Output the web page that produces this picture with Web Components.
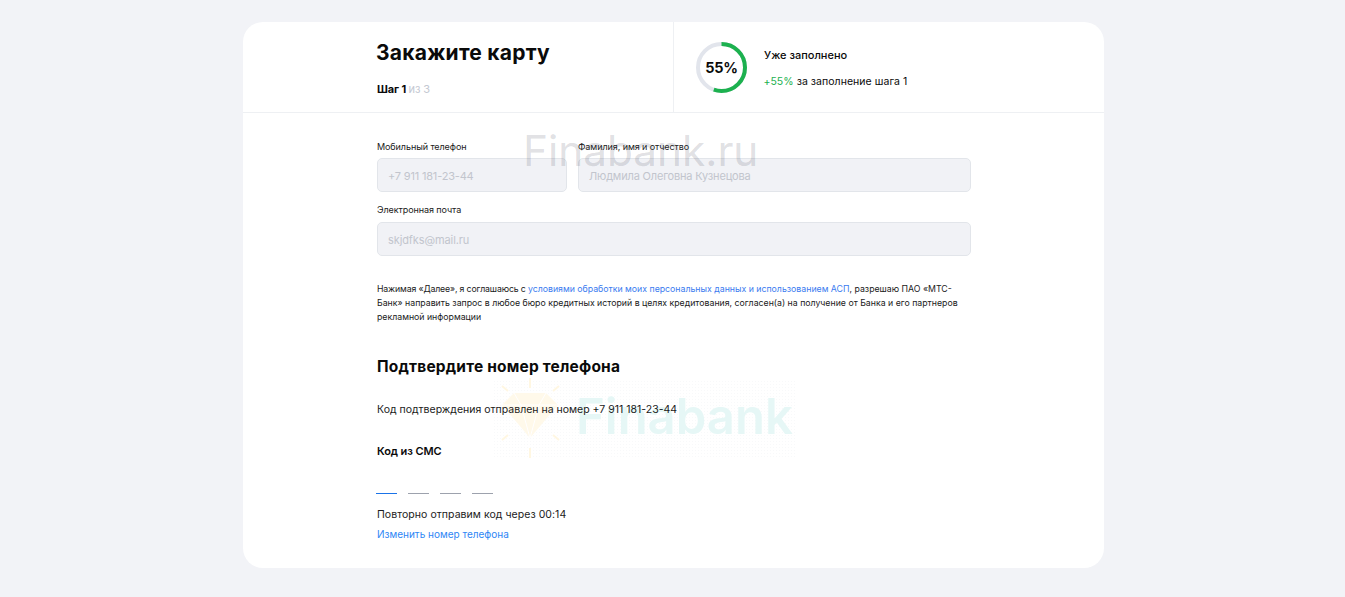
<!DOCTYPE html>
<html lang="ru">
<head>
<meta charset="utf-8">
<title>Закажите карту</title>
<style>
  html, body { margin: 0; height: 100%; background: #f2f3f7; }
  body { font-family: "Inter", "Liberation Sans", sans-serif; color: #0a0a0a; overflow: hidden; }
</style>
</head>
<body>
<order-card>
  <water-marks slot="under"></water-marks>
  <order-header slot="header" step="1" total="3" percent="55"></order-header>
  <section-form slot="body"></section-form>
  <top-mark slot="over"></top-mark>
</order-card>

<script>
// Card shell
class OrderCard extends HTMLElement {
  constructor() {
    super();
    this.attachShadow({ mode: 'open' });
    this.shadowRoot.innerHTML = `
      <style>
        :host { display: block; position: relative; width: 861px; height: 546px; margin: 22px auto 0; left: 1px;
                background: #fff; border-radius: 20px; box-sizing: border-box; overflow: hidden; }
      </style>
      <slot name="under"></slot>
      <slot name="header"></slot>
      <slot name="body"></slot>
      <slot name="over"></slot>
    `;
  }
}

class ProgressRing extends HTMLElement {
  connectedCallback() {
    const percent = Number(this.getAttribute('percent'));
    const r = 23.5;
    const len = 2 * Math.PI * r;
    this.attachShadow({ mode: 'open' });
    this.shadowRoot.innerHTML = `
      <style>
        :host { display: block; position: relative; width: 51px; height: 51px; }
        svg { display: block; transform: rotate(-90deg); }
        span { position: absolute; inset: 1px 0 0; display: flex; align-items: center; justify-content: center;
               font: 700 14.5px/1 "Inter", sans-serif; color: #0a0a0a; letter-spacing: -.3px; }
      </style>
      <svg width="51" height="51" viewBox="0 0 51 51" fill="none" stroke-width="4">
        <circle cx="25.5" cy="25.5" r="${r}" stroke="#e2e5ec"></circle>
        <circle cx="25.5" cy="25.5" r="${r}" stroke="#1cb14f" stroke-dasharray="${len * percent / 100} ${len}"></circle>
      </svg>
      <span>${percent}%</span>
    `;
  }
}

class OrderHeader extends HTMLElement {
  connectedCallback() {
    const step = this.getAttribute('step');
    const total = this.getAttribute('total');
    const percent = this.getAttribute('percent');
    this.attachShadow({ mode: 'open' });
    this.shadowRoot.innerHTML = `
      <style>
        :host { display: flex; position: relative; height: 91px; box-sizing: border-box; border-bottom: 1px solid #eef0f3; }
        .left { width: 431px; box-sizing: border-box; padding: 18px 0 0 133px; border-right: 1px solid #eef0f3; flex: none; }
        h1 { margin: 0; font: 700 21px/25px "Inter", sans-serif; letter-spacing: .25px; color: #0a0a0a; }
        .step { margin: 17px 0 0 1px; font: 700 11px/14px "Inter", sans-serif; color: #0a0a0a; letter-spacing: -.1px; }
        .step span { font-weight: 400; color: #c4c8d2; }
        .right { display: flex; align-items: center; gap: 17px; padding: 1px 0 0 22px; }
        .info { margin-top: 2px; }
        .title { font: 500 11px/14px "Inter", sans-serif; }
        .note { margin: 13px 0 0 -.6px; font: 400 10.5px/14px "Inter", sans-serif; letter-spacing: .05px; }
        .note b { font-weight: 400; color: #1cb14f; }
      </style>
      <div class="left">
        <h1>Закажите карту</h1>
        <div class="step">Шаг ${step} <span>из ${total}</span></div>
      </div>
      <div class="right">
        <progress-ring percent="${percent}"></progress-ring>
        <div class="info">
          <div class="title">Уже заполнено</div>
          <div class="note"><b>+${percent}%</b> за заполнение шага ${step}</div>
        </div>
      </div>
    `;
  }
}

// Disabled field with a small label above it
class TextField extends HTMLElement {
  connectedCallback() {
    this.attachShadow({ mode: 'open' });
    this.shadowRoot.innerHTML = `
      <style>
        :host { display: block; }
        label { display: block; height: 14px; margin-bottom: var(--label-gap, 5px); font: 400 9px/14px "Inter", sans-serif; color: #1a1a1a; letter-spacing: -.08px; }
        .box { height: 34px; box-sizing: border-box; padding: 1px 10px 0; display: flex; align-items: center;
               background: #f1f2f6; border: 1px solid #e2e5ea; border-radius: 5px;
               font: 400 11px/14px "Inter", sans-serif; color: #c2c5cd; letter-spacing: var(--value-track, -.18px); }
      </style>
      <label>${this.getAttribute('label')}</label>
      <div class="box">${this.getAttribute('value')}</div>
    `;
  }
}

class OtpInput extends HTMLElement {
  connectedCallback() {
    this.attachShadow({ mode: 'open' });
    const cells = Array.from({ length: 4 }, (_, i) => `<i class="${i === 0 ? 'on' : ''}"></i>`).join('');
    this.shadowRoot.innerHTML = `
      <style>
        :host { display: flex; gap: 11px; }
        i { display: block; width: 21px; height: 1px; background: #9da2ad; }
        i.on { background: #1a73e8; }
      </style>
      ${cells}
    `;
  }
}

class SectionForm extends HTMLElement {
  constructor() {
    super();
    this.attachShadow({ mode: 'open' });
    this.shadowRoot.innerHTML = `
      <style>
        :host { display: block; width: 594px; margin-left: 134px; padding-top: 27px; position: relative; }
        .row { display: grid; grid-template-columns: 190px 393px; gap: 11px; --label-gap: 4px; }
        text-field.mail { margin-top: 11px; --value-track: -.1px; }
        .legal { margin: 26px 0 0; font: 400 8.75px/14px "Inter", sans-serif; color: #1a1a1a; width: 590px; }
        .legal span { letter-spacing: -.15px; }
        a { color: #3a7bf0; text-decoration: none; }
        h2 { margin: 33px 0 0; font: 700 15.5px/20px "Inter", sans-serif; letter-spacing: .2px; color: #0a0a0a; }
        .sent { margin-top: 26px; font: 400 10.5px/14px "Inter", sans-serif; color: #1a1a1a; }
        .code { margin-top: 27px; font: 600 11px/14px "Inter", sans-serif; letter-spacing: -.1px; color: #0a0a0a; }
        otp-input { margin: 35px 0 0 -1px; }
        .again { margin-top: 14px; font: 400 10.5px/14px "Inter", sans-serif; letter-spacing: .05px; color: #1a1a1a; }
        .change { display: block; margin-top: 5px; font: 400 10px/14px "Inter", sans-serif; color: #2e86f5; }
      </style>
      <div class="row">
        <text-field label="Мобильный телефон" value="+7 911 181-23-44"></text-field>
        <text-field label="Фамилия, имя и отчество" value="Людмила Олеговна Кузнецова"></text-field>
      </div>
      <text-field class="mail" label="Электронная почта" value="skjdfks@mail.ru"></text-field>
      <p class="legal"><span>Нажимая «Далее», я соглашаюсь с </span><a href="#">условиями обработки моих персональных данных и использованием АСП</a>, разрешаю ПАО «МТС-Банк» направить запрос в любое бюро кредитных историй в целях кредитования, согласен(а) на получение от Банка и его партнеров рекламной информации</p>
      <h2>Подтвердите номер телефона</h2>
      <div class="sent">Код подтверждения отправлен на номер +7 911 181-23-44</div>
      <div class="code">Код из СМС</div>
      <otp-input></otp-input>
      <div class="again">Повторно отправим код через 00:14</div>
      <a class="change" href="#">Изменить номер телефона</a>
    `;
  }
}

// Site watermark at the top, lies over the form
class TopMark extends HTMLElement {
  constructor() {
    super();
    this.attachShadow({ mode: 'open' });
    this.shadowRoot.innerHTML = `
      <style>
        :host { display: block; position: absolute; left: 280px; top: 99px; pointer-events: none;
                font: 400 42.3px/60px "Inter", sans-serif; color: rgba(70,75,90,.18); white-space: nowrap; }
      </style>
      Finabank.ru
    `;
  }
}

// Faint logo watermark behind the text
class WaterMarks extends HTMLElement {
  constructor() {
    super();
    this.attachShadow({ mode: 'open' });
    this.shadowRoot.innerHTML = `
      <style>
        :host { display: block; position: absolute; left: 250px; top: 356px; width: 304px; height: 80px; pointer-events: none; }
        .dots { position: absolute; inset: 2px 0 0 0; opacity: .3;
                background-image: radial-gradient(#e7eaee 35%, transparent 40%); background-size: 3px 3px; }
        svg { position: absolute; left: 0; top: 0; }
        span { position: absolute; left: 83px; top: 11px; font: 600 49px/56px "Inter", sans-serif; color: #e6f7f6; white-space: nowrap; }
      </style>
      <div class="dots"></div>
      <svg width="80" height="84" viewBox="0 0 80 84" fill="none">
        <path d="M9 27 L21 15 H53 L65 27 L37 60 Z" fill="#fff9ea"></path>
        <path d="M9 27 H65 M21 15 L28 27 L37 60 L46 27 L53 15" stroke="#fff" stroke-width="1"></path>
        <path d="M37 0 V10 M37 70 V80 M9 8 L15 13 M66 8 L60 13 M9 62 L15 57 M66 62 L60 57" stroke="#fff7e2" stroke-width="2"></path>
      </svg>
      <span>Finabank</span>
    `;
  }
}

customElements.define('order-card', OrderCard);
customElements.define('progress-ring', ProgressRing);
customElements.define('order-header', OrderHeader);
customElements.define('text-field', TextField);
customElements.define('otp-input', OtpInput);
customElements.define('section-form', SectionForm);
customElements.define('top-mark', TopMark);
customElements.define('water-marks', WaterMarks);
</script>
</body>
</html>
